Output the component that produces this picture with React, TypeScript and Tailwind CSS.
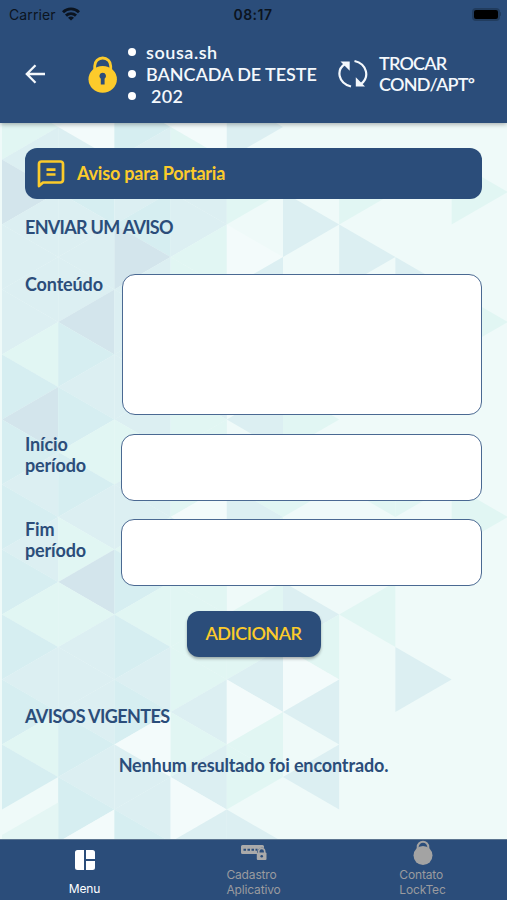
import { ReactNode } from 'react';

const COL = 56.2;
const ROW = 32.5;

const COLORS: Record<string, string> = {
  a: '#d3e5ec',
  b: '#d6eef1',
  c: '#dceff2',
  d: '#e1f6f3',
  e: '#ecf9f7',
  f: '#f3fbfb',
};

// one string per column, one letter per triangle from top to bottom
const MOSAIC = [
  'dcaccccdbabcbcbdbcbdbee',
  'fcbcccabcbdbcdadcccbcbf',
  'bccbacccccdccdbdbcbfccb',
  'fdccddcccdddfcddddcdcfc',
  'cedefceeecedcdeddcfddec',
  'eeeceeeeededeeecdfcecee',
  'eedececeeeedeeedeeeeeee',
  'eeeeeceeeeedeeeeeceeeee',
  'eedeeedeeeeedeeeeeeeeee',
];

function Mosaic() {
  return (
    <svg className="absolute inset-0 h-full w-full" viewBox="0 0 507 716" preserveAspectRatio="none">
      <rect width="507" height="716" fill="#effaf9" />
      {MOSAIC.map((col, c) =>
        col.split('').map((key, r) => {
          if (key === 'e') return null;
          const left = 2 + c * COL;
          const y = 4 + r * ROW;
          const right = (r + c) % 2 === 0;
          const base = right ? left : left + COL;
          const apex = right ? left + COL : left;
          return (
            <polygon
              key={`${c}-${r}`}
              points={`${base},${y - ROW} ${base},${y + ROW} ${apex},${y}`}
              fill={COLORS[key]}
            />
          );
        }),
      )}
      <path d="M2 712 58.200 679.500V716H2z" fill="#e4f6f4" />
    </svg>
  );
}

function StatusBar() {
  return (
    <div className="grid h-7 grid-cols-3 items-center pr-1.5 pl-[9px] font-['Inter'] text-[14px] text-[#0b1420]">
      <div className="flex items-center gap-[6px]">
        <span className="tracking-[0.1px]">Carrier</span>
        <svg width="18" height="14" viewBox="0 0 18 14" fill="none" stroke="currentColor" strokeWidth="2.900">
          <path d="M1 5.200a11.400 11.400 0 0 1 16 0" />
          <path d="M4 8.600a7.200 7.200 0 0 1 10 0" />
          <path d="M9 13.600 6 10.800a4.400 4.400 0 0 1 6 0z" fill="currentColor" stroke="none" />
        </svg>
      </div>
      <span className="-ml-1 text-center font-semibold tracking-[0.5px]">08:17</span>
      <div className="flex items-center justify-end">
        <div className="h-[13px] w-[28px] rounded-[4px] border-2 border-[#213c5e] bg-black" />
        <div className="h-1 w-[1.5px] rounded-r bg-[#213c5e]" />
      </div>
    </div>
  );
}

function Header() {
  return (
    <header className="relative z-10 h-[123px] shrink-0 bg-[#2b4d7a] shadow-[0_1px_5px_rgba(0,0,0,0.35)]">
      <StatusBar />
      <div className="flex pl-[25px] text-[18px] font-semibold text-[#f4f8fc]">
        <svg className="mt-9" width="21" height="20" viewBox="0 0 21 20" fill="none" stroke="currentColor" strokeWidth="2.300">
          <path d="M20 10H2M10.500 1.200 1.800 10l8.700 8.800" />
        </svg>
        <svg className="mt-[27px] ml-[42px]" width="30" height="38" viewBox="0 0 30 38">
          <path d="M6.700 16v-5a8 8 0 0 1 16 0v5" fill="none" stroke="#fccb2b" strokeWidth="2.800" />
          <ellipse cx="14.700" cy="24.300" rx="14.200" ry="13.400" fill="#fccb2b" />
          <path d="M14.700 17.800a3.300 3.300 0 0 1 1.900 6v5.700h-3.800v-5.700a3.300 3.300 0 0 1 1.900-6z" fill="#2b4d7a" />
        </svg>
        <ul className="mt-[13px] ml-[10px] w-[190px] leading-[22px] whitespace-pre">
          <Bullet><span className="tracking-[0.55px]">sousa.sh</span></Bullet>
          <Bullet><span className="tracking-[-0.05px]">BANCADA DE TESTE</span></Bullet>
          <Bullet><span className="tracking-[0.4px]"> 202</span></Bullet>
        </ul>
        <svg className="mt-[31px] ml-[20px]" width="30" height="30" viewBox="0 0 30 30" fill="none" stroke="currentColor" strokeWidth="2.200">
          <path d="M13 27.500C0 24-2 11 7 5M16.500 2c12.500 3 15.500 16 6.500 23" />
          <path d="M2.500 2.500h9.200v9.200zM27 27.500h-9.200v-9.200z" fill="currentColor" stroke="none" />
        </svg>
        <div className="mt-[25px] ml-[11px] leading-[21px]">
          <span className="tracking-[-0.8px]">TROCAR</span>
          <br />
          <span className="tracking-[-0.75px]">COND/APTº</span>
        </div>
      </div>
    </header>
  );
}

function Bullet({ children }: { children: ReactNode }) {
  return (
    <li className="flex items-center">
      <span className="mr-[10px] h-2 w-2 rounded-full bg-white" />
      {children}
    </li>
  );
}

function Field({ label, className }: { label: ReactNode; className: string }) {
  return (
    <label className="flex items-start justify-between leading-[21px] tracking-[-0.15px]">
      <span>{label}</span>
      <textarea className={`block resize-none rounded-[13px] border border-[#4a6992] bg-white ${className}`} />
    </label>
  );
}

function Main() {
  return (
    <main className="relative h-[716px] shrink-0 overflow-hidden">
      <Mosaic />
      <div className="relative flex flex-col px-[25px] pt-[25px] text-[18px] font-bold text-[#2b4d7a]">
        <div className="flex h-[51px] items-center rounded-[12px] bg-[#2b4d7a] pl-3 text-[#fccb2b]">
          <svg width="28" height="28" viewBox="0 0 28 28" fill="none" stroke="currentColor" strokeWidth="2.700" strokeLinejoin="round">
            <path d="M2 26V4a2.500 2.500 0 0 1 2.500-2.500h19A2.500 2.500 0 0 1 26 4v16a2.500 2.500 0 0 1-2.500 2.500H6z" />
            <path d="M9.500 9.700h9M9.500 14.500h9" />
          </svg>
          <span className="ml-3 tracking-[-0.2px]">Aviso para Portaria</span>
        </div>
        <h2 className="mt-[14px] leading-7 tracking-[-0.7px]">ENVIAR UM AVISO</h2>
        <div className="mt-[33px] flex flex-col gap-[18.5px]">
          <Field label="Conteúdo" className="h-[141px] w-[360px]" />
          <Field label={<>Início<br />período</>} className="h-[67px] w-[361px]" />
          <Field label={<>Fim<br />período</>} className="h-[67px] w-[361px]" />
        </div>
        <button
          type="button"
          className="mt-[25px] h-[46px] w-[134px] self-center rounded-[12px] bg-[#2b4d7a] pb-0.5 font-semibold tracking-[-0.5px] text-[#fccb2b] shadow-[0_2px_3px_rgba(0,0,0,0.3)]"
        >
          ADICIONAR
        </button>
        <h2 className="mt-[45px] leading-7 tracking-[-0.6px]">AVISOS VIGENTES</h2>
        <p className="mt-[21px] text-center leading-7 tracking-[-0.13px]">Nenhum resultado foi encontrado.</p>
      </div>
    </main>
  );
}

function TabBar() {
  return (
    <nav className="grid h-[61px] shrink-0 grid-cols-3 border-t border-[#5d7591] bg-[#2b4d7a] font-['Inter'] text-[12px] leading-[15px] tracking-[-0.15px] text-[#9a9b9f]">
      <div className="flex flex-col items-center pt-[10px] text-white">
        <svg width="20" height="20" viewBox="0 0 20 20" fill="currentColor">
          <path d="M2.500 0H9v20H2.500A2.500 2.500 0 0 1 0 17.500v-15A2.500 2.500 0 0 1 2.500 0zM11 0h6.500A2.500 2.500 0 0 1 20 2.500V9h-9zM11 11h9v6.500a2.500 2.500 0 0 1-2.500 2.500H11z" />
        </svg>
        <span className="mt-[11px]">Menu</span>
      </div>
      <div className="flex flex-col items-center pt-[5px]">
        <svg width="26" height="16" viewBox="0 0 26 16">
          <path d="M1.500 0h20A1.500 1.500 0 0 1 23 1.500V3c-4-1-7 1-7 6H1.500A1.500 1.500 0 0 1 0 7.500v-6A1.500 1.500 0 0 1 1.500 0z" fill="#aaa" />
          <path d="M2.500 4.700H5M6.500 4.700H9M10.500 4.700H13M14.500 4.700h2" stroke="#2b4d7a" strokeWidth="2" />
          <path d="M17.700 9V6.500a3 3 0 0 1 6 0V9" fill="none" stroke="#aaa" strokeWidth="1.600" />
          <rect x="15.800" y="7.500" width="9.700" height="7.500" rx="1" fill="#aaa" />
          <circle cx="20.700" cy="11.200" r="1.300" fill="#2b4d7a" />
        </svg>
        <span className="mt-[6px]">Cadastro<br />Aplicativo</span>
      </div>
      <div className="flex flex-col items-center">
        <svg width="20" height="26" viewBox="0 0 20 26">
          <path d="M4.700 12V7a5.300 5.300 0 0 1 10.600 0v5" fill="none" stroke="#a3a3a3" strokeWidth="2" />
          <ellipse cx="10" cy="15.500" rx="9.500" ry="9.500" fill="#a3a3a3" />
        </svg>
        <span className="mt-[1px]">Contato<br />LockTec</span>
      </div>
    </nav>
  );
}

export default function App() {
  return (
    <div className="flex h-[900px] w-[507px] flex-col overflow-hidden font-['Lato',sans-serif]">
      <Header />
      <Main />
      <TabBar />
    </div>
  );
}
